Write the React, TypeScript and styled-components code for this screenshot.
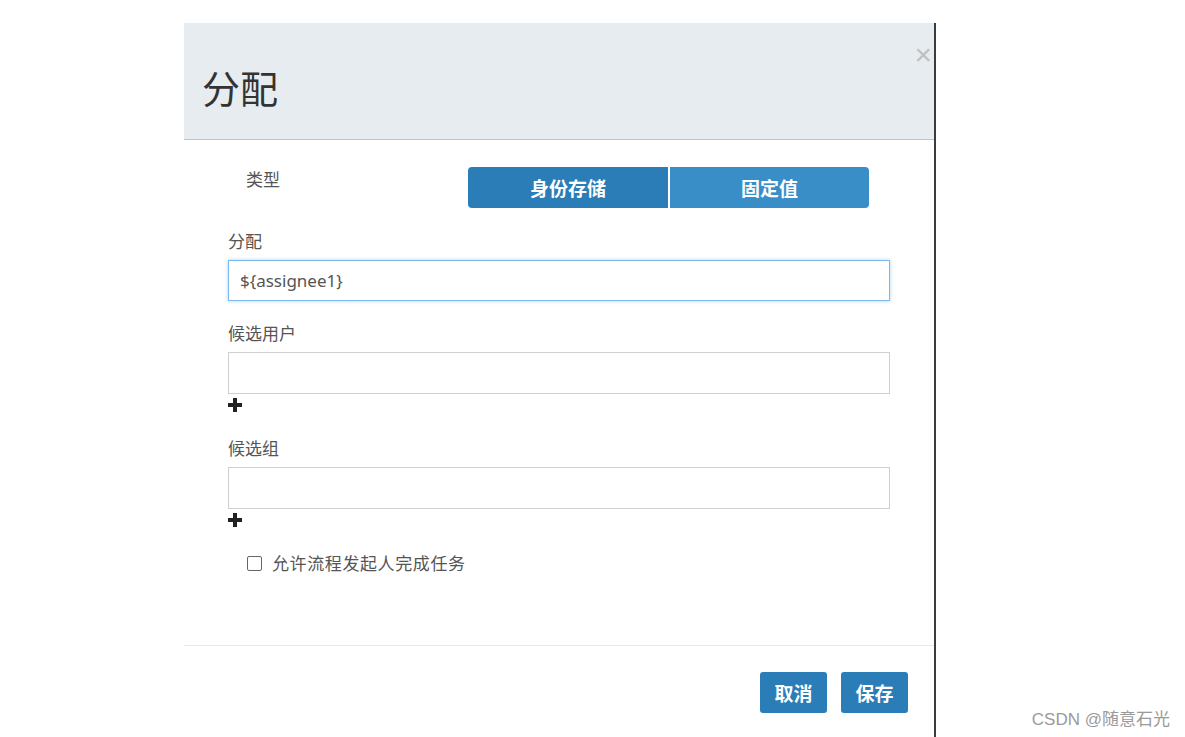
import React from "react";
import styled, { createGlobalStyle } from "styled-components";

const Global = createGlobalStyle`
  html, body { margin: 0; padding: 0; background: #fff; }
  body { font-family: "Noto Sans CJK SC", "Noto Sans", sans-serif; }
  * { box-sizing: border-box; }
`;

const Page = styled.div`
  position: relative;
  width: 1185px;
  height: 737px;
  overflow: hidden;
  display: flex;
  padding-left: 184px;
  padding-top: 23px;
`;

const Modal = styled.div`
  width: 752px;
  height: 714px;
  background: #fff;
  border-right: 2px solid #3c3c3c;
  display: flex;
  flex-direction: column;
`;

const Header = styled.div`
  position: relative;
  height: 117px;
  background: #e7ecf0;
  border-bottom: 1px solid #bcc4cc;
  padding: 38px 0 0 18px;
`;

const Title = styled.h1`
  margin: 0;
  font-weight: 400;
  font-size: 38px;
  line-height: 52px;
  color: #333;
`;

const Close = styled.span`
  position: absolute;
  right: 2px;
  top: 17px;
  font-family: "Liberation Sans", sans-serif;
  font-size: 30px;
  line-height: 30px;
  color: #c0c0c0;
`;

const Body = styled.div`
  padding: 27px 44px 0 44px;
  height: 506px;
  border-bottom: 1px solid #e8e8e8;
`;

const TypeRow = styled.div`
  display: flex;
  align-items: flex-start;
`;

const TypeLabel = styled.div`
  width: 240px;
  padding-left: 18px;
  padding-top: 2px;
  font-size: 17px;
  line-height: 20px;
  color: #555;
`;

const Segmented = styled.div`
  display: flex;
  gap: 2px;
`;

const Segment = styled.div<{ $active?: boolean; $first?: boolean }>`
  height: 41px;
  display: flex;
  align-items: center;
  justify-content: center;
  color: #fff;
  font-size: 19px;
  font-weight: 700;
  background: ${(p) => (p.$active ? "#2a7db6" : "#3a8ec7")};
  border-radius: ${(p) => (p.$first ? "4px 0 0 4px" : "0 4px 4px 0")};
  width: ${(p) => (p.$first ? "200px" : "199px")};
`;

const Field = styled.div<{ $mt: number }>`
  margin-top: ${(p) => p.$mt}px;
`;

const Label = styled.div`
  font-size: 17px;
  line-height: 20px;
  color: #555;
  margin-bottom: 9px;
`;

const Input = styled.div<{ $focus?: boolean; $h: number }>`
  width: 662px;
  height: ${(p) => p.$h}px;
  border: 1px solid ${(p) => (p.$focus ? "#7cb9ea" : "#cfcfcf")};
  box-shadow: ${(p) => (p.$focus ? "0 0 4px rgba(102,175,233,0.5)" : "none")};
  padding: 0 11px;
  display: flex;
  align-items: center;
  font-size: 17px;
  color: #555;
  font-family: "Noto Sans", "Noto Sans CJK SC", sans-serif;
`;

const Plus = styled.div`
  margin-top: 3px;
  height: 16px;
  display: flex;
  align-items: center;
`;

const CheckRow = styled.label`
  margin-top: 25px;
  margin-left: 19px;
  display: flex;
  align-items: center;
  gap: 10px;
  font-size: 17px;
  line-height: 20px;
  letter-spacing: 0.6px;
  color: #555;
`;

const Box = styled.span`
  width: 15px;
  height: 15px;
  border: 1px solid #666;
  border-radius: 2px;
  background: #fff;
`;

const Footer = styled.div`
  display: flex;
  justify-content: flex-end;
  gap: 14px;
  padding: 26px 26px 0 0;
`;

const Btn = styled.div`
  width: 67px;
  height: 41px;
  border-radius: 3px;
  background: #2a7db6;
  color: #fff;
  font-size: 19px;
  font-weight: 700;
  display: flex;
  align-items: center;
  justify-content: center;
`;

const Watermark = styled.div`
  position: absolute;
  right: 15px;
  bottom: 7px;
  font-size: 17px;
  color: #9a9a9a;
  font-family: "Liberation Sans", "Noto Sans CJK SC", sans-serif;
`;

const PlusIcon = () => (
  <svg width="14" height="14" viewBox="0 0 14 14">
    <rect x="0" y="5" width="14" height="4" fill="#222" />
    <rect x="5" y="0" width="4" height="14" fill="#222" />
  </svg>
);

export default function App() {
  return (
    <>
      <Global />
      <Page>
        <Modal>
          <Header>
            <Title>分配</Title>
            <Close>×</Close>
          </Header>
          <Body>
            <TypeRow>
              <TypeLabel>类型</TypeLabel>
              <Segmented>
                <Segment $active $first>身份存储</Segment>
                <Segment>固定值</Segment>
              </Segmented>
            </TypeRow>
            <Field $mt={23}>
              <Label>分配</Label>
              <Input $focus $h={41}>{"${assignee1}"}</Input>
            </Field>
            <Field $mt={22}>
              <Label>候选用户</Label>
              <Input $h={42} />
              <Plus><PlusIcon /></Plus>
            </Field>
            <Field $mt={25}>
              <Label>候选组</Label>
              <Input $h={42} />
              <Plus><PlusIcon /></Plus>
            </Field>
            <CheckRow>
              <Box />
              允许流程发起人完成任务
            </CheckRow>
          </Body>
          <Footer>
            <Btn>取消</Btn>
            <Btn>保存</Btn>
          </Footer>
        </Modal>
        <Watermark>CSDN @随意石光</Watermark>
      </Page>
    </>
  );
}
